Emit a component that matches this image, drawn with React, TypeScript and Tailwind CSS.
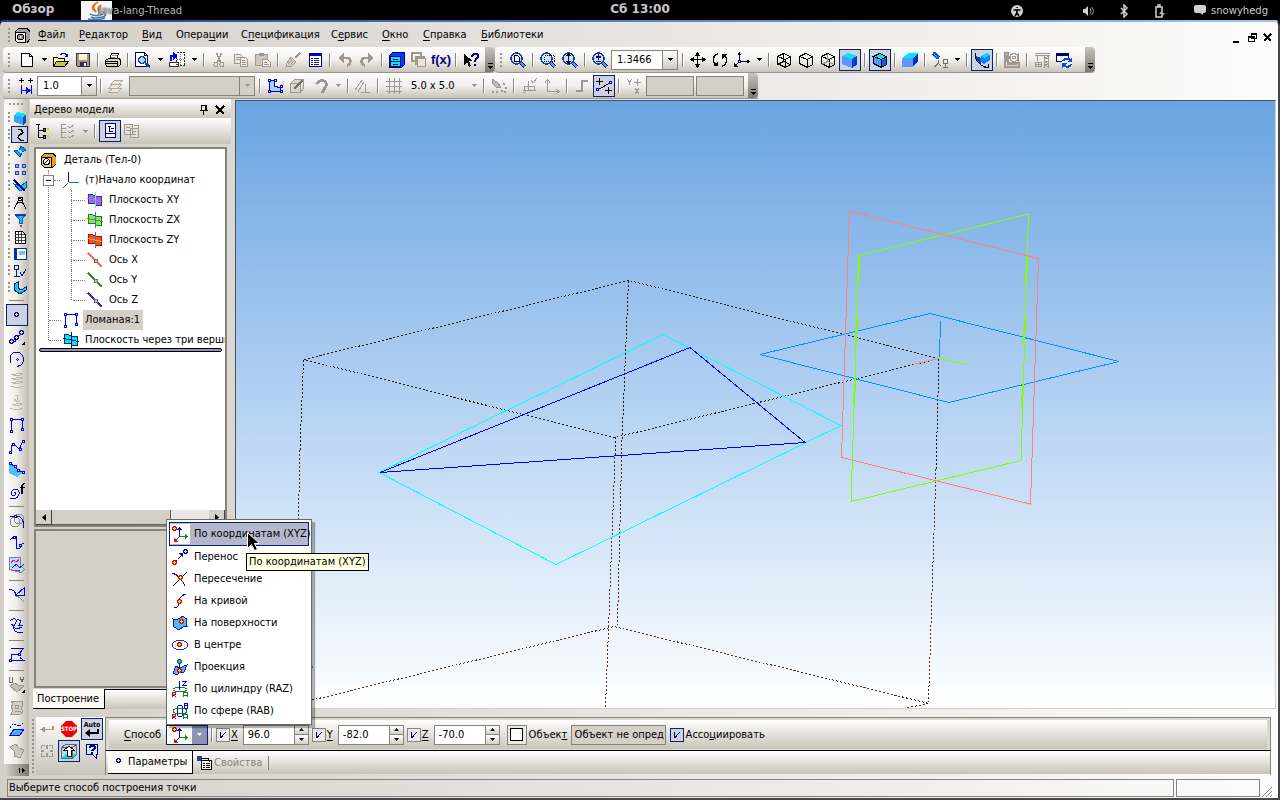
import { useState } from 'react';
import type { ReactNode } from 'react';

const GRAY = '#a0988e';
const BLUE = '#0000f0';
const NAVY = '#00007f';

function Icon({ children, size = 16 }: { children: ReactNode; size?: number }) {
  return (
    <svg
      width={size}
      height={size}
      viewBox={`0 0 ${size} ${size}`}
      fill="none"
      shapeRendering="crispEdges"
      aria-hidden="true"
      className="shrink-0"
    >
      {children}
    </svg>
  );
}

// Hot spot used by all the point icons
function Dot({ x, y, ring = '#f00000', core = '#ffff00' }: { x: number; y: number; ring?: string; core?: string }) {
  return (
    <g>
      <path d={`M${x + 1} ${y}h3v1h1v3h-1v1h-3v-1h-1v-3h1z`} fill={ring} />
      <path d={`M${x + 2} ${y + 1}h1v1h1v1h-1v1h-1v-1h-1v-1h1z`} fill={core} />
    </g>
  );
}

function Node({ x, y, c = BLUE }: { x: number; y: number; c?: string }) {
  return (
    <g>
      <path d={`M${x} ${y}h3v3h-3z`} fill={c} />
      <path d={`M${x + 1} ${y + 1}h1v1h-1z`} fill="#fff" />
    </g>
  );
}

function Lens({ children }: { children: ReactNode }) {
  return (
    <Icon>
      <path d="M11 11l4 4" stroke={NAVY} strokeWidth="4" />
      <path d="M11 11l4 4" stroke="#5a8fe0" strokeWidth="2" />
      <circle cx="6.5" cy="6.5" r="5.5" fill="#c9e4fb" stroke="#1c3aa0" strokeWidth="1.5" />
      {children}
    </Icon>
  );
}

function Cube({ hidden = '' }: { hidden?: string }) {
  return (
    <Icon>
      <path d="M1.5 4.5l6-3 7 3v8l-5 3-8-4zM1.5 4.5l8 3 5-3M9.5 7.5v8" stroke="#000" />
      {hidden && <path d="M7.5 1.5v8l7 3M7.5 9.5l-6 3" stroke={hidden} />}
    </Icon>
  );
}

const newDoc = (
  <Icon>
    <path d="M2.5 1.5h8l3 3v10h-11z" fill="#fff" stroke="#000" />
    <path d="M10.5 1.5v3h3" stroke="#000" />
  </Icon>
);
const openDoc = (
  <Icon>
    <path d="M.5 14.5v-9h4l1 1h6v3" fill="#ffffa0" stroke="#000" />
    <path d="M.5 14.5l3-5h12l-4 5z" fill="#c8c850" stroke="#000" />
    <path d="M8 3c1-2 4-2 5 0" stroke={BLUE} strokeWidth="1.5" />
    <path d="M15 1v4h-4z" fill={BLUE} />
  </Icon>
);
const saveDoc = (
  <Icon>
    <path d="M1.5 1.5h13v13h-12l-1-1z" fill="#a89878" stroke="#303048" />
    <path d="M4 2h8v6H4z" fill="#fdf6e4" />
    <path d="M5 10h7v4H5z" fill="#303048" />
    <path d="M9 11h2v3H9z" fill="#fff" />
  </Icon>
);
const printDoc = (
  <Icon>
    <path d="M4.5 7.5l2-6h7l-2 6z" fill="#fff" stroke="#000" />
    <path d="M7 3.5h5M6 5.5h5" stroke="#909090" />
    <path d="M.5 8.5l3-2h11l1 2v4l-2 2H2l-1.5-2z" fill="#d8d8b0" stroke="#000" />
    <path d="M1 9.5h11M1 11.5h11M12.5 9v5M3 14.5h9" stroke="#000" />
    <path d="M9 10h2v1H9z" fill="#f0e000" />
  </Icon>
);
const previewDoc = (
  <Icon>
    <path d="M.5.5h9l3 3v11H.5z" fill="#fff" stroke={NAVY} />
    <path d="M9.5.5v3h3" stroke={NAVY} />
    <path d="M10 11l5 4" stroke="#1c3aa0" strokeWidth="2.5" />
    <circle cx="7" cy="8" r="3.5" fill="#a8dcfb" stroke="#1c3aa0" strokeWidth="1.5" />
  </Icon>
);
const sheetDoc = (
  <Icon>
    <path d="M7.500 .5h8v13h-8z" stroke="#303030" strokeDasharray="2 1" fill="#fff" />
    <path d="M8 7.5h7M11.5 2v11" stroke="#707070" strokeDasharray="1 1" />
    <path d="M.5 10.5h9v4h-9z" fill="#fff" stroke="#303030" />
    <path d="M7 12h2v1H7z" fill="red" />
    <path d="M2 9V4h3" stroke={BLUE} strokeWidth="2" />
    <path d="M4 0l4 4-4 4z" fill={BLUE} />
  </Icon>
);
const cutIcon = (
  <Icon>
    <path d="M5.5 1l4 9M10.5 1l-4 9" stroke={GRAY} strokeWidth="1.5" />
    <circle cx="5" cy="12.5" r="2" stroke={GRAY} />
    <circle cx="11" cy="12.5" r="2" stroke={GRAY} />
  </Icon>
);
const copyIcon = (
  <Icon>
    <path d="M1.5 2.5h6l2 2v7h-8z" fill="#eee9e2" stroke={GRAY} />
    <path d="M3 5.5h4M3 7.5h4" stroke={GRAY} />
    <path d="M7.5 5.5h5l2 2v7h-7z" fill="#eee9e2" stroke={GRAY} />
    <path d="M9 8.5h3M9 10.5h4M9 12.5h4" stroke={GRAY} />
  </Icon>
);
const pasteIcon = (
  <Icon>
    <path d="M.5 2.5h12v11H.5z" fill="#cfc8be" stroke={GRAY} />
    <path d="M4 1h5v3H4z" fill={GRAY} />
    <path d="M7.5 7.5h5l3 3v4h-8z" fill="#f4f0ea" stroke={GRAY} />
    <path d="M9 10.5h3M9 12.5h5" stroke={GRAY} />
  </Icon>
);
const brushIcon = (
  <Icon>
    <path d="M15 1l-5 5" stroke={GRAY} strokeWidth="2.5" />
    <path d="M6 5l5 5-4 4-6 1 1-4z" fill="#d8cec4" stroke={GRAY} />
    <path d="M3 12l4-4M5 13l4-4" stroke={GRAY} />
  </Icon>
);
const specIcon = (
  <Icon>
    <path d="M2.5 1.5h12v13h-12z" fill="#fff" stroke={NAVY} />
    <path d="M3 2h11v2H3z" fill={BLUE} />
    <path d="M4 6.5h2M4 8.5h2M4 10.5h2M4 12.5h2M7 6.5h5M7 8.5h5M7 10.5h5M7 12.5h5" stroke="#202060" />
  </Icon>
);
const undoIcon = (
  <Icon>
    <path d="M5 6h5c4 0 5 5 0 8" stroke={GRAY} strokeWidth="2.5" />
    <path d="M1 6l6-5v10z" fill={GRAY} />
  </Icon>
);
const redoIcon = (
  <Icon>
    <path d="M11 6H6c-4 0-5 5 0 8" stroke={GRAY} strokeWidth="2.5" />
    <path d="M15 6L9 1v10z" fill={GRAY} />
  </Icon>
);
const libIcon = (
  <Icon>
    <path d="M.5 3.5l3-3h12v12l-3 3H.5z" fill="#0040ff" stroke={NAVY} />
    <path d="M1.5 4.5h10v10h-10z" fill="#00e8f0" stroke={NAVY} />
    <path d="M2 9.5h9M4 7.5h5M4 12.5h5" stroke={NAVY} />
  </Icon>
);
const varsIcon = (
  <Icon>
    <path d="M1 1h9v8H1zM5 5h8v7H5z" stroke={GRAY} strokeWidth="2" />
    <path d="M6.5 6.5h8v8h-8z" stroke={GRAY} fill="#e8e2da" />
  </Icon>
);
const helpIcon = (
  <Icon>
    <path d="M1 2v11l3-3 2 5 2-1-2-5h4z" fill="#000" />
    <path d="M9 5c0-4 6-4 6-1 0 3-3 2-3 6M12 12v2" stroke={NAVY} strokeWidth="2" />
  </Icon>
);

const zoomSheet = (
  <Lens>
    <path d="M4.5 3.5h3l2 2v4h-5z" stroke="#000" fill="#fff" />
  </Lens>
);
const zoomFrame = (
  <Lens>
    <path d="M4.5 3.5h10v6h-10z" stroke="#000" strokeDasharray="1 1" />
  </Lens>
);
const zoomFit = (
  <Lens>
    <path d="M6.5 3v7" stroke="#000" />
    <path d="M6.5 1l2.500 3h-5zM6.5 12l2.500-3h-5z" fill="#000" />
  </Lens>
);
const zoomPlus = (
  <Lens>
    <path d="M6.5 2v6M4 5h5M4 9.5h5" stroke={NAVY} strokeWidth="1.5" />
  </Lens>
);
const moveIcon = (
  <Icon>
    <path d="M7.5 2v12M2 7.5h12" stroke="#000" />
    <path d="M7.5 0l3 4h-6zM7.5 16l3-4h-6zM0 7.5l4-3v6zM16 7.5l-4-3v6z" fill="#000" />
  </Icon>
);
const rotateIcon = (
  <Icon>
    <path d="M6 2C1 3 0 10 4 13M10 14c5-1 6-8 2-11" stroke="#000" strokeWidth="1.5" />
    <path d="M1 14h5V9zM15 2h-5v5z" fill="#000" />
  </Icon>
);
const orientIcon = (
  <Icon>
    <path d="M5.5 9V2M6 9.5h8M5 10l-4 4" stroke="#000" />
    <path d="M5.5 0l2 3h-4zM16 9.5l-3 2v-4zM0 15v-4l4 4z" fill="#000" />
    <Node x={4} y={8} />
  </Icon>
);
const shaded = (
  <Icon>
    <path d="M0 4l6-3 9 3-5 3z" fill="#00e8ff" />
    <path d="M0 4l10 3v9l-10-4z" fill="#5898ff" />
    <path d="M10 7l5-3v9l-5 3z" fill="#0040d0" />
  </Icon>
);
const shadedEdges = (
  <Icon>
    <path d="M1.5 4.5l6-3 7 3-5 3z" fill="#00e8ff" stroke="#000" />
    <path d="M1.5 4.5l8 3v8l-8-4z" fill="#5898ff" stroke="#000" />
    <path d="M9.5 7.5l5-3v8l-5 3z" fill="#1060d8" stroke="#000" />
  </Icon>
);
const perspective = (
  <Icon>
    <path d="M0 6l7-5h9l-5 5z" fill="#00e8ff" />
    <path d="M0 6h11v9H0z" fill="#5898ff" />
    <path d="M11 6l5-5v8l-5 6z" fill="#0030c0" />
  </Icon>
);
const spotlight = (
  <Icon>
    <path d="M1 1l6 5" stroke="#1050e0" strokeWidth="4" />
    <path d="M2 2l4 4" stroke="#00c8f8" strokeWidth="1" />
    <path d="M6.5 8v3l-4 4M6.5 11l2 3M11.5 7.5h4v4h-4zM13.5 12v3M11 15.5h5" stroke="#707070" />
  </Icon>
);
const rebuild = (
  <Icon>
    <path d="M2 4l5 2v7l-5-4z" fill="#0040c0" />
    <path d="M7 4l6-3 3 2v5l-6 4-4-3z" fill="#1080ff" />
    <path d="M7 4l6-3 3 2-5 3z" fill="#00d8ff" />
    <path d="M2 1C-1 5 4 13 12 15M10 15h4v-3" stroke="#000" />
  </Icon>
);
const sectionGray = (
  <Icon>
    <path d="M1 1h3v10h11v4H1z" stroke={GRAY} strokeWidth="1.5" />
    <circle cx="10" cy="5.5" r="4" stroke={GRAY} strokeWidth="1.5" />
    <circle cx="10" cy="5.5" r="1.5" stroke={GRAY} />
    <path d="M3 12.5h10M2.5 3v7M14.5 1v10" stroke={GRAY} />
  </Icon>
);
const craneIcon = (
  <Icon>
    <path d="M.5 1.5h15M.5 3.5h15M10.5 4v12M14.5 4v12M3.5 4v5M1.5 10.5h6v4h-6zM1 12.5h6M4.5 10v4" stroke={GRAY} />
    <path d="M10 4l5 4-5 4 5 3M14 4l-4 4 4 4-4 3" stroke={GRAY} />
  </Icon>
);
const refreshWin = (
  <Icon>
    <path d="M.5 1.5h12v8h-12z" fill="#fff" stroke={NAVY} />
    <path d="M0 1h13v3H0z" fill={NAVY} />
    <path d="M6 6h10v10H6z" fill="#fff" />
    <path d="M7 9c2-3 5-3 7-1M15 12c-1 3-5 4-7 1" stroke="#0050e0" strokeWidth="2" />
    <path d="M16 5v5h-5zM6 16v-5h5z" fill="#0050e0" />
  </Icon>
);

const stepIcon = (
  <Icon>
    <path d="M3.5 0v5M1 2.500h5M12.500 0v5M10 2.500h5" stroke="#000" />
    <path d="M3.500 7v9M13.500 7v9M4 12.500h8" stroke={BLUE} />
    <path d="M8 9v7l5-3.500z" fill={BLUE} />
  </Icon>
);
const layersIcon = (
  <Icon>
    <path d="M1 14l4-4h9l-4 4zM1 10l4-4h9l-4 4zM3 6l4-4h8l-4 4z" fill="#f0e8e0" stroke="#b0a698" />
  </Icon>
);
const sketchIcon = (
  <Icon>
    <path d="M2.5 2.5h5v6l6 1v4h-11z" fill="#a8d4ec" stroke={BLUE} />
    <Node x={1} y={1} />
    <Node x={7} y={1} />
    <Node x={1} y={12} />
    <Node x={13} y={12} />
    <Node x={13} y={7} />
  </Icon>
);
const localBox = (
  <Icon>
    <path d="M1.5 5.5l4-4h9l-3 4zM1.5 5.5h10v9h-10zM11.5 14.5l3-4v-9" stroke={GRAY} fill="#ddd4ca" />
    <path d="M5 11l8-8" stroke="#706860" strokeWidth="2" />
  </Icon>
);
const magnetIcon = (
  <Icon>
    <path d="M3 7c4-7 12-5 10 1l-4 7" stroke={GRAY} strokeWidth="3" />
    <path d="M1 5l4 3" stroke="#e8e0d8" strokeWidth="2" />
  </Icon>
);
const perpIcon = (
  <Icon>
    <path d="M0 12L7 2M3 14l6-10M10.5 6v8M6 14.5h9" stroke={GRAY} />
  </Icon>
);
const gridIcon = (
  <Icon>
    <path d="M3.5 0v16M8.5 0v16M13.5 0v16M0 3.5h16M0 8.5h16M0 13.5h16" stroke={GRAY} />
  </Icon>
);
const snapIcon = (
  <Icon>
    <path d="M1 1l5 3 4 5-4 1-5-5z" fill="#c0b8ae" stroke={GRAY} />
    <path d="M12 5h2v2h-2zM14 9h2v2h-2zM10 12h2v2h-2zM5 13h2v2H5zM1 13h2v2H1zM13 13h2v2h-2z" fill={GRAY} />
  </Icon>
);
const localAxes = (
  <Icon>
    <path d="M6.5 3v9h7M6 12l-5 3M3 8.5h9v4H2zM9 2l2 3 4-5" stroke={GRAY} />
  </Icon>
);
const axesGray = (
  <Icon>
    <path d="M3.5 2v11h11M1 4.5l2.5-3L6 4.5M12 11l3 2.5-3 2.5" stroke={GRAY} />
  </Icon>
);
const orthoIcon = (
  <Icon>
    <path d="M2 13h6V3h6" stroke={GRAY} strokeWidth="1.5" />
  </Icon>
);
const snapPoints = (
  <Icon>
    <path d="M3.500 0v7M0 3.500h7M12.500 9v7M9 12.500h7" stroke="#000" />
    <path d="M3 11l11-6" stroke="#000" />
    <Node x={0} y={10} />
    <Node x={13} y={3} />
  </Icon>
);
const xyIcon = (
  <Icon>
    <path d="M1 1l2.5 3L6 1M3.5 4v3M11.5 1v7M8 4.5h7M9 10l4 6M13 10l-4 6" stroke={GRAY} />
  </Icon>
);

function Grip() {
  return (
    <svg width="4" height="18" className="mx-1 shrink-0" shapeRendering="crispEdges" aria-hidden="true">
      <path d="M2 2v14" stroke="#98948c" strokeWidth="2" strokeDasharray="2 2" />
    </svg>
  );
}

function Sep() {
  return <span className="mx-[3px] h-[14px] w-[2px] shrink-0 border-r border-white bg-[#8a867e]" />;
}

function Tool({ icon, label, active }: { icon: ReactNode; label: string; active?: boolean }) {
  return (
    <button
      type="button"
      aria-label={label}
      className={
        active
          ? 'flex h-[22px] w-[22px] shrink-0 items-center justify-center border border-[#0a246a] bg-[#ced2e0]'
          : 'flex h-[22px] w-[22px] shrink-0 items-center justify-center'
      }
    >
      {icon}
    </button>
  );
}

function Arrow({ gray }: { gray?: boolean }) {
  return (
    <span className="flex w-[12px] shrink-0 justify-center">
      <svg width="5" height="3" shapeRendering="crispEdges" aria-hidden="true">
        <path d="M0 0h5v1H0zM1 1h3v1H1zM2 2h1v1H2z" fill={gray ? GRAY : '#000'} />
      </svg>
    </span>
  );
}

function Cap() {
  return (
    <span className="flex w-[10px] shrink-0 items-end justify-center self-stretch rounded-r-sm bg-gradient-to-b from-[#c8c5bf] to-[#7c7870] pb-[3px]">
      <svg width="5" height="6" shapeRendering="crispEdges" aria-hidden="true">
        <path d="M0 0h5v1H0zM0 3h5v1H0zM1 4h3v1H1zM2 5h1v1H2z" fill="#000" />
      </svg>
    </span>
  );
}

function Combo({ label, value, className, disabled }: { label: string; value: string; className: string; disabled?: boolean }) {
  return (
    <span className={'relative flex h-5 shrink-0 border border-[#86837d] ' + className}>
      <select
        aria-label={label}
        disabled={disabled}
        className={
          disabled
            ? 'h-full w-full appearance-none bg-[#d4d0c8]'
            : 'h-full w-full appearance-none bg-white pl-[5px] text-black'
        }
      >
        <option>{value}</option>
      </select>
      <span
        className={
          disabled
            ? 'pointer-events-none absolute inset-y-0 right-0 flex w-[15px] items-center justify-center border-l border-[#86837d] bg-[#d4d0c8]'
            : 'pointer-events-none absolute inset-y-0 right-0 flex w-[15px] items-center justify-center border-l border-[#86837d] bg-gradient-to-b from-white to-[#cfcbc2]'
        }
      >
        <Arrow gray={disabled} />
      </span>
    </span>
  );
}

const bar = 'flex items-center bg-gradient-to-b from-white via-[#f1f0ed] to-[#c8c4b9] rounded-l border-b border-[#9a968e]';

function TopBar() {
  return (
    <header className="relative flex h-5 shrink-0 items-start bg-black font-['DejaVu_Sans',sans-serif] text-[#c8c8c8]">
      <span className="pl-3 text-[12px] leading-[19px] font-bold">Обзор</span>
      <span className="ml-[27px] flex items-center">
        <svg width="31" height="19" viewBox="0 0 31 19" aria-hidden="true">
          <path d="M0 0h31v19H0z" fill="#f4f5f7" />
          <path d="M17 1c-6 4-5 6-2 10-5-3-5-6 2-10zM20 4c-4 3-3 5-2 8 2-3-1-4 2-8z" stroke="#e76f1c" strokeWidth="1.5" fill="#e76f1c" />
          <path d="M9 13c4 2 9 2 13 0M10 16c4 2 8 1 11 0M22 12c4 0 3 4-1 4M7 18c6 1 12 1 17-1" stroke="#5382a1" strokeWidth="1.5" fill="none" />
        </svg>
        <span className="relative -ml-[14px] text-[10px] leading-[21px] text-[#b4b4b4] [text-shadow:0_0_2px_#000]">java-lang-Thread</span>
      </span>
      <span className="absolute inset-x-0 text-center text-[12px] leading-[19px] font-bold">Сб 13:00</span>
      <span className="ml-auto flex items-center pr-3 text-[10px] leading-[21px]">
        <svg width="200" height="14" viewBox="0 0 200 14" aria-hidden="true">
          <circle cx="10" cy="7" r="6" fill="#d0d0d0" />
          <path d="M10 3v1M6.500 6h7M10 6v3l-2 3M10 9l2 3" stroke="#000" strokeWidth="1.5" />
          <path d="M76 5h2l3-3v10l-3-3h-2z" fill="#d0d0d0" />
          <path d="M83 4q2 3 0 6M85 3q3 4 0 8" stroke="#909090" fill="none" />
          <path d="M114 4l6 6-3 3V1l3 3-6 6" stroke="#d0d0d0" fill="none" strokeWidth="1.5" />
          <path d="M149 3h6v10h-6zM151 1h2v2h-2z" stroke="#d0d0d0" fill="none" strokeWidth="1.5" />
          <path d="M155 6l-3 4h3v3l3-4h-3z" fill="#b0b0b0" />
          <path d="M189 1h8q2 0 2 2v4q0 2-2 2h-1v2l-3-2h-4q-2 0-2-2V3q0-2 2-2z" fill="#d0d0d0" />
        </svg>
        <span className="ml-1">snowyhedg</span>
      </span>
    </header>
  );
}

const menuItems = [
  ['', 'Ф', 'айл', 'w-[41px]'],
  ['', 'Р', 'едактор', 'w-[63px]'],
  ['', 'В', 'ид', 'w-[34px]'],
  ['Опера', 'ц', 'ии', 'w-[65px]'],
  ['С', 'п', 'ецификация', 'w-[90px]'],
  ['С', 'е', 'рвис', 'w-[51px]'],
  ['', 'О', 'кно', 'w-[41px]'],
  ['', 'С', 'правка', 'w-[58px]'],
  ['', 'Б', 'иблиотеки', 'w-[70px]'],
];

function MenuBar() {
  return (
    <nav className="flex h-[25px] shrink-0 items-center pt-px">
      <Grip />
      <span className="mr-2 -ml-px">
        <Icon>
          <path d="M1 5l4-4h8l3 4v7l-3 4H5l-4-3z" fill="#a0a0a0" stroke="#000" />
          <path d="M1 5h10v10H3l-2-2z" fill="#f0f0f0" stroke="#000" />
          <circle cx="6.5" cy="10" r="3" fill="#909090" stroke="#000" />
          <circle cx="6.5" cy="10" r="1" fill="#fff" />
        </Icon>
      </span>
      {menuItems.map(([before, key, after, width]) => (
        <button key={key + after} type="button" className={'shrink-0 text-left whitespace-nowrap ' + width}>
          {before}
          <u className="underline-offset-2">{key}</u>
          {after}
        </button>
      ))}
      <span className="mt-[6px] mr-[2px] ml-auto flex items-center gap-[3px]">
        <Icon size={12}><path d="M1 9h6v2H1z" fill="#000" /></Icon>
        <Icon size={12}><path d="M4.5 2.5h5v4h-5zM1.5 5.5h6v4h-6z" stroke="#000" fill="#fff" /><path d="M4 1h6v2H4zM1 4h7v2H1z" fill="#000" /></Icon>
        <Icon size={12}><path d="M2 2l7 7M9 2l-7 7" stroke="#000" strokeWidth="1.5" /></Icon>
      </span>
    </nav>
  );
}

function MainToolbar() {
  return (
    <div className="flex h-[26px] shrink-0 overflow-hidden">
      <div className={bar + ' rounded-r'}>
        <Grip />
        <span className="w-px shrink-0" />
        <Tool icon={newDoc} label="Создать" />
        <Arrow />
        <Tool icon={openDoc} label="Открыть" />
        <Tool icon={saveDoc} label="Сохранить" />
        <Sep />
        <Tool icon={printDoc} label="Печать" />
        <Sep />
        <Tool icon={previewDoc} label="Просмотр" />
        <Arrow />
        <Tool icon={sheetDoc} label="Лист" />
        <Arrow />
        <Sep />
        <Tool icon={cutIcon} label="Вырезать" />
        <Tool icon={copyIcon} label="Копировать" />
        <Tool icon={pasteIcon} label="Вставить" />
        <Sep />
        <Tool icon={brushIcon} label="Свойства" />
        <Tool icon={specIcon} label="Спецификация" />
        <Sep />
        <Tool icon={undoIcon} label="Отменить" />
        <Tool icon={redoIcon} label="Повторить" />
        <Sep />
        <Tool icon={libIcon} label="Библиотеки" />
        <Tool icon={varsIcon} label="Переменные" />
        <button type="button" className="w-[22px] shrink-0 font-['Liberation_Sans',sans-serif] text-[13px] font-bold text-[#00007f]">f(x)</button>
        <Sep />
        <Tool icon={helpIcon} label="Справка" />
        <span className="w-[3px] shrink-0" />
        <Cap />
      </div>
      <div className={bar + ' rounded-r'}>
        <Grip />
        <Tool icon={zoomSheet} label="Показать все" />
        <Sep />
        <Tool icon={zoomFrame} label="Рамка" />
        <Tool icon={zoomFit} label="Масштаб" />
        <Sep />
        <Tool icon={zoomPlus} label="Приблизить" />
        <Combo label="Текущий масштаб" value="1.3466" className="mr-px w-[67px]" />
        <Sep />
        <Tool icon={moveIcon} label="Сдвинуть" />
        <Tool icon={rotateIcon} label="Повернуть" />
        <Tool icon={orientIcon} label="Ориентация" />
        <Arrow />
        <Sep />
        <Tool icon={<Cube hidden="#000" />} label="Каркас" />
        <Tool icon={<Cube />} label="Без невидимых линий" />
        <Tool icon={<Cube hidden="#909090" />} label="Невидимые линии тонкие" />
        <Tool icon={shaded} label="Полутоновое" active />
        <Sep />
        <Tool icon={shadedEdges} label="Полутоновое с каркасом" active />
        <Sep />
        <Tool icon={perspective} label="Перспектива" />
        <Sep />
        <Tool icon={spotlight} label="Освещение" />
        <Arrow />
        <Sep />
        <Tool icon={rebuild} label="Перестроить" active />
        <Sep />
        <Tool icon={sectionGray} label="Сечение" />
        <Sep />
        <Tool icon={craneIcon} label="Сборка" />
        <Tool icon={refreshWin} label="Обновить" />
        <span className="w-[10px] shrink-0" />
        <Cap />
      </div>
    </div>
  );
}

function StateToolbar() {
  return (
    <div className="flex h-[26px] shrink-0 overflow-hidden">
      <div className={bar}>
        <Grip />
        <Tool icon={stepIcon} label="Шаг курсора" />
        <Combo label="Шаг" value="1.0" className="w-[60px]" />
        <Sep />
        <Tool icon={layersIcon} label="Слои" />
        <span className="w-[2px] shrink-0" />
        <Combo label="Слой" value="" className="mr-px w-[126px]" disabled />
        <Sep />
        <Tool icon={sketchIcon} label="Эскиз" />
        <Tool icon={localBox} label="Контекст" />
        <span className="w-[2px] shrink-0" />
        <Tool icon={magnetIcon} label="Привязки" />
        <Arrow gray />
        <Sep />
        <Tool icon={perpIcon} label="Параметрический режим" />
        <Sep />
        <span className="w-px shrink-0" />
        <Tool icon={gridIcon} label="Сетка" />
        <button type="button" className="ml-[6px] w-[57px] shrink-0 text-left">5.0 x 5.0</button>
        <Arrow gray />
        <Sep />
        <Tool icon={snapIcon} label="Дискретность" />
        <Sep />
        <span className="w-px shrink-0" />
        <Tool icon={localAxes} label="ЛСК" />
        <Tool icon={axesGray} label="Оси" />
        <Sep />
        <Tool icon={orthoIcon} label="Ортогональное черчение" />
        <Tool icon={snapPoints} label="Привязка" active />
        <Sep />
        <Tool icon={xyIcon} label="Координаты" />
        <input aria-label="X" disabled className="ml-px h-5 w-12 shrink-0 border border-[#86837d] bg-[#d4d0c8]" />
        <input aria-label="Y" disabled className="mr-1 ml-[2px] h-5 w-12 shrink-0 border border-[#86837d] bg-[#d4d0c8]" />
        <Cap />
      </div>
    </div>
  );
}

const compact: { label: string; icon: ReactNode; active?: boolean }[] = [
  { label: 'Деталь', icon: <Icon><path d="M2 5l4-3 8 2-3 3z" fill="#00e8ff" /><path d="M2 5l9 2v8l-9-3z" fill="#40a0ff" /><path d="M11 7l3-3v8l-3 3z" fill="#0050c8" /></Icon> },
  { label: 'Кривые', active: true, icon: <Icon><path d="M6 2.500h3l2 3-4 3-1 2 3 3h3" stroke="#000" strokeWidth="1.500" /></Icon> },
  { label: 'Поверхности', icon: <Icon><path d="M2 7l5-1 2-4 5 4-4 2-2 5z" fill="#2090e8" stroke="#0050b0" /><path d="M6 6l5 3" stroke="#a0e0ff" strokeWidth="2" /></Icon> },
  { label: 'Массивы', icon: <Icon><path d="M3 3h3v3H3zM10 3h3v3h-3zM3 10h3v3H3zM10 10h3v3h-3z" fill="#a0b8ff" stroke="#2040c0" /></Icon> },
  { label: 'Вспомогательная геометрия', icon: <Icon><path d="M2 6l7 2 5-4v6l-6 3z" fill="#20c8f8" stroke="#0050b0" /><path d="M2 2l11 11" stroke={NAVY} strokeWidth="1.5" /></Icon> },
  { label: 'Измерения', icon: <Icon><path d="M8 2L2 14M8 2l6 12M4 10q4-5 8 0M6 2h4v3H6z" stroke="#000" /></Icon> },
  { label: 'Фильтры', icon: <Icon><path d="M3 2h11l-4 5v4H7V7z" fill="#30b0f8" stroke="#1060c0" /><path d="M3 2h11v2H3z" fill="#1040a0" /><path d="M8 13h2v2H8z" fill="#d04000" /></Icon> },
  { label: 'Таблицы', icon: <Icon><path d="M3.5 2.5h7l3 3v9h-10z" fill="#fff" stroke="#000" /><path d="M3 5.500h10M3 8.500h10M3 11.500h10M6.500 3v12M9.500 3v12" stroke="#404040" /></Icon> },
  { label: 'Отчеты', icon: <Icon><path d="M3.500 2.500h11v11h-11z" fill="#fff" stroke="#0030a0" strokeWidth="1.500" /><path d="M2 2h3v12H2z" fill="#0030a0" /><path d="M7 5h6v4H7z" fill="#80c0f8" /></Icon> },
  { label: 'Оформление', icon: <Icon><path d="M2.500 2.500h4v4h-4zM4.500 7v6M2 13.500h6M8 9l2 4 4-7" stroke="#001880" /></Icon> },
  { label: 'Листовое тело', icon: <Icon><path d="M2 4l4-2v6l3 2 5-3v3l-6 4-6-4z" fill="#20c8e8" stroke="#002080" /></Icon> },
];

const curveTools: { label: string; icon: ReactNode }[] = [
  { label: 'Группа точек', icon: <Icon><path d="M3 13c8 1-2-6 4-6s5-2 6-4" stroke={BLUE} /><Dot x={0} y={10} ring={BLUE} /><Dot x={5} y={6} ring={BLUE} /><Dot x={10} y={1} ring={BLUE} /><path d="M16 12v4h-4z" fill="#000" /></Icon> },
  { label: 'Дуга', icon: <Icon><path d="M1 8C1 1 9-1 13 4s0 12-5 11M1 8l1 4" stroke={BLUE} /><path d="M7 8h1v1H7zM8 7h1v1H8zM9 8h1v1H9zM8 9h1v1H8z" fill={BLUE} /></Icon> },
  { label: 'Спираль цилиндрическая', icon: <Icon><path d="M2 1q6 3 12 0q-6-2-10 2M2 5q6 3 12 0q-6-2-10 2M2 9q6 3 12 0q-6-2-10 2M2 13q6 3 12 0" stroke="#c0b4a8" /></Icon> },
  { label: 'Спираль коническая', icon: <Icon><path d="M6 1q3-2 3 2t-4 1M5 5q4 3 6 0M3 9q6 3 10 0q-6-2-8 2M1 13q7 3 13 0" stroke="#c0b4a8" /></Icon> },
  { label: 'Ломаная', icon: <Icon><path d="M2.500 14V2.500h11V12" stroke={BLUE} /><Node x={1} y={1} /><Node x={12} y={1} /><Node x={1} y={13} /><Node x={12} y={11} /></Icon> },
  { label: 'Сплайн', icon: <Icon><path d="M2 13C2 4 5 4 7 7s4 4 5-1l2-4" stroke={BLUE} /><Node x={0} y={12} /><Node x={3} y={4} /><Node x={10} y={9} /><Node x={13} y={1} /></Icon> },
  { label: 'Сплайн на поверхности', icon: <Icon><path d="M0 3l6 3 9 5-7 5-8-4z" fill="#50c0f8" /><path d="M1 3l5 2 3 4 6 3" stroke={BLUE} /><Node x={0} y={1} /><Node x={5} y={4} /><Node x={8} y={8} /><Node x={13} y={10} /></Icon> },
  { label: 'Кривая по закону', icon: <Icon><path d="M5 10c1-2 3 0 1 2s-5-1-3-4 8-2 7 3-6 5-9 4" stroke={BLUE} /><path d="M16 .5q-3 0-3 3V11M11 4.500h5" stroke="#000" strokeWidth="1.500" /></Icon> },
  { label: 'sep', icon: null },
  { label: 'Скругление', icon: <Icon><circle cx="6" cy="9" r="5" stroke="#909090" /><circle cx="10" cy="6" r="5" stroke="#909090" /><path d="M1 3h6c5 0 8 4 8 12" stroke={BLUE} /><Node x={5} y={2} /></Icon> },
  { label: 'Соединение', icon: <Icon><path d="M1 5l5-4c5 0-2 12 3 13 4 0 1-5 6-6" stroke={BLUE} /><Node x={4} y={1} /><Node x={10} y={9} /></Icon> },
  { label: 'Кривая пересечения', icon: <Icon><path d="M.5.5h11v8l4 4-3 3-12-3z" fill="#b8e0f4" stroke="#808080" /><path d="M2 6q2-4 4-2t4-2M5 13l6 1" stroke="#f000f0" /><path d="M3 11q4-5 6-2t6-2" stroke={BLUE} /></Icon> },
  { label: 'sep', icon: null },
  { label: 'Проекционная кривая', icon: <Icon><path d="M0 2q6 1 7 6M15 1L7 8h8z" stroke={BLUE} /><path d="M7 9q4 1 8 6" stroke="#808080" /></Icon> },
  { label: 'sep', icon: null },
  { label: 'Эквидистанта', icon: <Icon><path d="M1 4c5-5 8-1 5 3s1 6 7 3M2 8c4-2 1 7 6 7h6M8 2l4 2-2 4 4 0" stroke={BLUE} /></Icon> },
  { label: 'sep', icon: null },
  { label: 'Контур', icon: <Icon><path d="M2 1.500h12l-4 6H2v6h13l-4-3" stroke={BLUE} /><Node x={0} y={12} /><Node x={9} y={6} /></Icon> },
  { label: 'sep', icon: null },
  { label: 'UV', icon: <Icon><path d="M.5 0v5h3V0M11 0l2 5 2-5" stroke="#706860" /><path d="M1 9l5-3 3 2 6 1-7 6z" fill="#c8beb2" stroke={GRAY} /><path d="M16 12v4h-4z" fill="#000" /></Icon> },
  { label: 'Заплатка', icon: <Icon><path d="M2 2h11l1 4-2 3 2 4-3 2H2l2-4-2-3 2-3z" fill="#d8cec4" stroke={GRAY} /><path d="M6 6h3v3H6zM6 12h6" stroke={GRAY} /></Icon> },
  { label: 'Поверхность', icon: <Icon><path d="M1 14l4-6h10l-4 6z" fill="#40b0f8" stroke={BLUE} /><path d="M1 7q3-6 6-3t8-3" stroke={BLUE} strokeDasharray="2 1" /></Icon> },
  { label: 'Сшивка', icon: <Icon><path d="M1 4l6-3 3 4 5 2-4 8-6-2 1-4z" fill="#d0c6bc" stroke={GRAY} /></Icon> },
];

function CompactPanel() {
  return (
    <aside className="flex w-[25px] shrink-0 flex-col overflow-hidden rounded-t bg-gradient-to-r from-[#fdfdfc] via-[#efede9] to-[#bfbbb0]">
      <svg width="16" height="10" className="ml-1 shrink-0" shapeRendering="crispEdges" aria-hidden="true">
        <path d="M1 5h16" stroke="#98948c" strokeWidth="2" strokeDasharray="2 2" />
      </svg>
      {compact.map(({ label, icon, active }) => (
        <div key={label} className="flex h-[17px] shrink-0 items-center pl-[3px]">
          <svg width="4" height="12" className="shrink-0" shapeRendering="crispEdges" aria-hidden="true">
            <path d="M2 0v12" stroke="#98948c" strokeWidth="2" strokeDasharray="2 2" />
          </svg>
          <button
            type="button"
            aria-label={label}
            className={
              active
                ? 'flex h-[17px] w-[17px] items-center justify-center overflow-hidden border border-[#0a246a] bg-[#ced2e0]'
                : 'flex h-[17px] w-[17px] items-center justify-center overflow-hidden'
            }
          >
            {icon}
          </button>
        </div>
      ))}
      <span className="mx-[5px] mt-1 mb-[3px] h-px shrink-0 bg-[#8a867e]" />
      <span className="ml-[2px] flex shrink-0">
        <Tool active label="Точка" icon={<Icon><Dot x={5} y={5} ring={BLUE} /></Icon>} />
      </span>
      {curveTools.map(({ label, icon }, i) =>
        icon ? (
          <button key={i} type="button" aria-label={label} className="flex h-[22px] shrink-0 items-center justify-center">
            {icon}
          </button>
        ) : (
          <span key={i} className="mx-[5px] mt-1 mb-[3px] h-px shrink-0 bg-[#8a867e]" />
        ),
      )}
      <span className="mt-auto flex h-[12px] shrink-0 items-center justify-end bg-gradient-to-r from-[#d8d5ce] to-[#7c7870] pr-1">
        <svg width="6" height="5" shapeRendering="crispEdges" aria-hidden="true"><path d="M0 0h1v5H0zM3 0v5l3-2.500z" fill="#000" /></svg>
      </span>
    </aside>
  );
}

function PlaneIcon({ fill, edge, v, h }: { fill: string; edge: string; v: string; h: string }) {
  return (
    <Icon>
      <path d="M1.5 2.5h4l3 2h6v9h-5l-2-2h-6z" fill={fill} stroke={edge} />
      <path d="M8.5 0v16" stroke={v} />
      <path d="M0 6.5l16 3" stroke={h} />
    </Icon>
  );
}

function AxisIcon({ color }: { color: string }) {
  return (
    <Icon>
      <path d="M1 1l14 14" stroke={color} strokeWidth="2" />
      <path d="M7 7h3v3H7z" fill="#c8b8c8" stroke="#707070" />
    </Icon>
  );
}

const tree: { text: string; depth: number; icon: ReactNode; selected?: boolean }[] = [
  { text: '(т)Начало координат', depth: 1, icon: <Icon><path d="M5.500 0v10" stroke={BLUE} /><path d="M6 10.500h10" stroke="#109050" /><path d="M5 11l-5 5" stroke="#e02020" /></Icon> },
  { text: 'Плоскость XY', depth: 2, icon: <PlaneIcon fill="#7f70f8" edge="#4020c0" v="#70f080" h="#ff6060" /> },
  { text: 'Плоскость ZX', depth: 2, icon: <PlaneIcon fill="#70f070" edge="#208010" v="#5060e0" h="#e05020" /> },
  { text: 'Плоскость ZY', depth: 2, icon: <PlaneIcon fill="#ff5010" edge="#c00000" v="#6060e0" h="#70e050" /> },
  { text: 'Ось X', depth: 2, icon: <AxisIcon color="#ff6a4a" /> },
  { text: 'Ось Y', depth: 2, icon: <AxisIcon color="#309020" /> },
  { text: 'Ось Z', depth: 2, icon: <AxisIcon color="#5020b0" /> },
  { text: 'Ломаная:1', depth: 1, selected: true, icon: <Icon><path d="M2.500 14V2.500h11V12" stroke={BLUE} /><Node x={1} y={1} /><Node x={12} y={1} /><Node x={1} y={13} /><Node x={12} y={11} /></Icon> },
  { text: 'Плоскость через три вершины', depth: 1, icon: <PlaneIcon fill="#00e8f0" edge="#003060" v={NAVY} h={NAVY} /> },
];

function TreePanel() {
  const [open, setOpen] = useState(true);
  const rows = open ? tree : tree.filter((row) => row.depth === 1);
  return (
    <section className="flex w-[201px] shrink-0 flex-col overflow-hidden">
      <div className="flex h-[19px] shrink-0 items-center bg-gradient-to-b from-white to-[#cbc7bd] pt-[2px] pr-[5px] pl-1">
        <h2>Дерево модели</h2>
        <button type="button" aria-label="Закрепить" className="ml-auto"><Icon size={12}><path d="M3.500 1v5M3 1.500h5M7 1v5M8 1v5M2 6.500h8M5.500 7v4" stroke="#000" /></Icon></button>
        <button type="button" aria-label="Закрыть" className="ml-1"><Icon size={12}><path d="M2 2l8 8M10 2l-8 8" stroke="#000" strokeWidth="1.500" /></Icon></button>
      </div>
      <div className="flex h-[26px] shrink-0 items-center bg-gradient-to-b from-white to-[#c8c4b9] pl-[2px]">
        <Tool label="Структура модели" icon={<Icon><path d="M1 1.500h4M3.500 2v13M3 14.500h5M3 7.500h5" stroke="#000" strokeWidth="1.500" /><path d="M8.500 5.500h2v3h-2zM8.500 12.500h2v3h-2z" fill="#20a0a0" stroke="#000" /><path d="M12 5h2v2h-2zM12 12h2v2h-2z" fill="#f0c000" /></Icon>} />
        <span className="ml-[3px] flex">
          <Tool label="Отображение" icon={<Icon><path d="M1.500 1v14M1 1.500h5M1 5.500h5M1 9.500h5M1 14.500h5M8 3l2 2 4-3M8 8l2 2 4-3M8 13l2 2 4-3" stroke={GRAY} /></Icon>} />
        </span>
        <Arrow gray />
        <Sep />
        <Tool active label="Дерево" icon={<Icon><path d="M3.500 .5h10v14h-10z" fill="#fff" stroke={NAVY} strokeWidth="1.500" /><path d="M6 3.500h3M7.500 4v4h3M9 5.500h3M3 10.500h10" stroke={NAVY} /></Icon>} />
        <Tool label="Связи" icon={<Icon><path d="M.5 1.500h8v10h-8zM6.500 5.500h8v9h-8z" fill="#e8e0d8" stroke={GRAY} /><path d="M2 4.500h4M2 7.500h4M8 8.500h4M8 11.500h4M10 2h4v3" stroke={GRAY} /></Icon>} />
      </div>
      <div className="mx-[4px] mt-[3px] flex min-h-0 flex-1 flex-col border-2 border-[#86837d] bg-white text-black">
        <div className="flex h-[21px] shrink-0 items-center pl-1">
          <Icon>
            <path d="M1 5l4-4h8l3 4v7l-3 3H5l-4-3z" fill="#f0a020" stroke="#000" />
            <path d="M1 5h10v10H4l-3-3z" fill="#ffd060" stroke="#000" />
            <circle cx="6.5" cy="9.5" r="3" fill="#fff" stroke="#000" />
            <path d="M5 11l3-3" stroke="#000" />
          </Icon>
          <span className="ml-2">Деталь (Тел-0)</span>
        </div>
        <ul className="relative">
          <li aria-hidden="true" className="absolute top-0 left-[12px] h-[170px] border-l border-dotted border-[#808080]" />
          {rows.map(({ text, depth, icon, selected }, i) => (
            <li key={text} className="relative flex h-5 items-center whitespace-nowrap">
              {depth === 2 && <span className="absolute top-0 left-[35px] h-1/2 border-l border-dotted border-[#808080]" />}
              {depth === 2 && text !== 'Ось Z' && <span className="absolute bottom-0 left-[35px] h-1/2 border-l border-dotted border-[#808080]" />}
              {i === 0 ? (
                <button
                  type="button"
                  aria-label="Свернуть"
                  onClick={() => setOpen(!open)}
                  className="relative ml-[7px] flex h-[11px] w-[11px] items-center justify-center border border-[#808080] bg-white"
                >
                  <span className="h-px w-[5px] bg-black" />
                </button>
              ) : (
                <span className={depth === 2 ? 'w-[37px] shrink-0' : 'w-[13px] shrink-0'} />
              )}
              <span
                className={
                  i === 0
                    ? 'mr-[3px] w-[6px] shrink-0 border-t border-dotted border-[#808080]'
                    : 'mr-[2px] w-[12px] shrink-0 border-t border-dotted border-[#808080]'
                }
              />
              {icon}
              <span className={selected ? 'ml-[4px] bg-[#d4d0c8] py-[3px] pr-[3px] pl-[2px]' : 'ml-[6px] overflow-hidden'}>{text}</span>
            </li>
          ))}
        </ul>
        <div className="mx-[3px] -mt-[2px] h-[4px] shrink-0 rounded border border-black bg-[#9090b0]" />
        <div className="mt-auto flex h-[15px] shrink-0 bg-[#eae8e4]">
          <button type="button" aria-label="Влево" className="flex w-[16px] items-center justify-center border-r border-b border-[#404040] bg-[#d4d0c8]">
            <svg width="4" height="7" aria-hidden="true"><path d="M4 0v7L0 3.500z" fill="#000" /></svg>
          </button>
          <span className="w-[119px] border-r border-b border-[#606060] bg-[#d4d0c8]" />
          <button type="button" aria-label="Вправо" className="ml-auto flex w-[16px] items-center justify-center border-r border-b border-[#404040] bg-[#d4d0c8]">
            <svg width="4" height="7" aria-hidden="true"><path d="M0 0v7l4-3.500z" fill="#000" /></svg>
          </button>
        </div>
      </div>
      <div className="mx-[4px] mt-[2px] mb-px h-[159px] shrink-0 border-2 border-[#86837d] bg-[#d4d0c8]" />
      <div className="flex h-5 shrink-0 bg-[#d4d0c8]">
        <button type="button" className="ml-[3px] w-[72px] border-r border-b border-black bg-[#fbfaf5] pl-[4px] text-left">Построение</button>
        <span className="flex-1 border-t border-black bg-gradient-to-b from-white to-[#c8c4b9]" />
      </div>
    </section>
  );
}

function Viewport() {
  return (
    <main className="mt-px ml-[4px] min-w-0 flex-1 border border-[#45525f] border-r-[#d4d0c8] border-b-[#d4d0c8] bg-gradient-to-b from-[#69a4e2] to-white">
      <svg
        className="block h-full w-full"
        viewBox="236 101 1039 607"
        preserveAspectRatio="xMinYMin slice"
        fill="none"
        shapeRendering="crispEdges"
        role="img"
        aria-label="Модель"
      >
        <g strokeDasharray="2 2" stroke="#201810">
          <path d="M304 359.500L629 280.500L939 358.500L615 437.500z" />
          <path d="M303.500 360L300 450M628.500 281L622 440M615.500 437v20M939 359l-3 110" />
        </g>
        <g strokeDasharray="2 2" stroke="#5a2c14">
          <path d="M300 450L294 708M622 440L617.500 625M615 457L605.500 708M936 469L928.500 702" />
          <path d="M300 703L614 626.500L929 703.500L905 708" />
        </g>
        <path d="M379 472.500L663 334.500L841 425.500L556 564.500z" stroke="#00ffff" />
        <path d="M380 472.500L690 347.500L805 442.500z" stroke="#0000f0" />
        <path d="M760 354.500L930 313.500L1119 361.500L949 402.500zM940.500 321L939.500 357" stroke="#0090ff" />
        <path d="M859 255.500L1028.500 214L1021 460.500L851 501.500zM939 358.500l29 6" stroke="#80ff00" />
        <path d="M859 256l-1 30M857 316l-1 30M855 378l-1 28M1027 255l-1 31M1025 318l-1 27M1023 384l-1 24" stroke="#80ff00" strokeWidth="2" />
        <path d="M849.500 211L1038.500 258.500L1030.500 504L841.500 457.500zM913 364.500l26-6" stroke="#ff8080" />
        <path d="M312 666h1v2h-1z" fill="#20c020" />
      </svg>
    </main>
  );
}

const coordIcon = (
  <Icon>
    <Dot x={0} y={0} />
    <path d="M7.500 4v7" stroke={BLUE} />
    <path d="M7.500 1l2.500 3H5z" fill={BLUE} />
    <path d="M8 10.500h6" stroke="#109010" />
    <path d="M16 10.500l-3 2.500V8z" fill="#109010" />
    <path d="M7 11l-3 3" stroke="#d01010" />
    <path d="M2 16v-4l4 4z" fill="#d01010" />
  </Icon>
);

const methods: { text: string; icon: ReactNode }[] = [
  { text: 'По координатам (XYZ)', icon: coordIcon },
  { text: 'Перенос', icon: <Icon><path d="M4 12l7-7" stroke="#000080" strokeDasharray="2 1" /><path d="M11 4v5L6 4z" fill="#001080" /><Dot x={0} y={11} /><Dot x={11} y={0} ring={BLUE} /></Icon> },
  { text: 'Пересечение', icon: <Icon><path d="M1 15L15 1" stroke="#000" /><path d="M0 2q8 2 13 13" stroke={BLUE} /><Dot x={6} y={4} /></Icon> },
  { text: 'На кривой', icon: <Icon><path d="M2 15q5 0 5-6t7-8" stroke={BLUE} /><Dot x={5} y={6} /></Icon> },
  { text: 'На поверхности', icon: <Icon><path d="M1 4q7 1 9-3l5 3q-1 5 0 7-4 0-8 4l-5-3z" fill="#50b8f8" stroke="#0020c0" /><Dot x={7} y={4} /></Icon> },
  { text: 'В центре', icon: <Icon><ellipse cx="8" cy="8" rx="7.500" ry="5" stroke="#2030d0" /><Dot x={5} y={5} /></Icon> },
  { text: 'Проекция', icon: <Icon><path d="M1 14l3-7 3 2 8-3-3 7q-5 0-7 3z" fill="#50b8f8" stroke="#0020c0" /><path d="M7.500 4v6" stroke={BLUE} /><Dot x={5} y={0} ring="#0060c0" core="#50e050" /><Dot x={5} y={9} /></Icon> },
  { text: 'По цилиндру (RAZ)', icon: <Icon><path d="M1 8q7-4 14 0M1 9q7 4 14 0" stroke="#108020" /><path d="M7.500 0v9M10 .5h4l-3 4h4" stroke={BLUE} /><path d="M.5 16v-5h3v2.500H1l3 2.500" stroke="#c01010" /><path d="M11.500 16v-4l2-1 2 1v4M12 14h3" stroke="#108020" /></Icon> },
  { text: 'По сфере (RAB)', icon: <Icon><ellipse cx="8" cy="8" rx="3" ry="6" stroke={BLUE} /><ellipse cx="8" cy="8" rx="7" ry="2.500" stroke="#108020" /><path d="M12.500 5V.5h3v2h-3M15.500 3v2h-3" stroke={BLUE} /><path d="M.5 16v-5h3v2.500H1l3 2.500" stroke="#c01010" /><path d="M11.500 16v-4l2-1 2 1v4M12 14h3" stroke="#108020" /></Icon> },
];

function MethodMenu() {
  return (
    <div role="menu" className="absolute bottom-full left-0 z-10 w-[146px] border border-[#6c6a66] bg-white p-[2px] text-black shadow-[3px_3px_1px_rgba(0,0,0,0.3)]">
      {methods.map(({ text, icon }, i) => (
        <button
          key={text}
          type="button"
          role="menuitem"
          className={
            i === 0
              ? 'flex h-[24px] w-full items-center border border-[#0a246a] bg-[#b4b8ce] whitespace-nowrap'
              : 'flex h-[22px] w-full items-center pl-px whitespace-nowrap'
          }
        >
          <span className="flex h-[20px] w-[20px] shrink-0 items-center justify-center bg-white">{icon}</span>
          <span className="pl-[4px]">{text}</span>
        </button>
      ))}
      <div role="tooltip" className="absolute top-[33px] left-[79px] h-[18px] border border-black bg-[#ffffe1] px-[2px] leading-4 whitespace-nowrap">
        По координатам (XYZ)
      </div>
      <svg width="12" height="20" viewBox="0 0 12 20" className="absolute top-[12px] left-[80px]" aria-hidden="true">
        <path d="M.5.5v16l4-4 3 6 3-1-3-6h5z" fill="#000" stroke="#fff" />
      </svg>
    </div>
  );
}

function Check({ label, hot }: { label: string; hot?: boolean }) {
  return (
    <label className="flex shrink-0 items-center">
      <span className="relative flex h-[14px] w-[14px]">
        <input
          type="checkbox"
          defaultChecked
          className={
            hot
              ? 'h-[14px] w-[14px] appearance-none border border-[#0a246a] bg-[#ced2e0]'
              : 'h-[14px] w-[14px] appearance-none border border-[#86837d] bg-[#ece9e4]'
          }
        />
        <svg width="14" height="14" className="pointer-events-none absolute" shapeRendering="crispEdges" aria-hidden="true">
          <path d="M4.500 4v6M5 9.500L10 4" stroke={NAVY} />
        </svg>
      </span>
      <span className={hot ? 'ml-[2px]' : 'ml-px'}>{hot ? <>Ассо<u>ц</u>иировать</> : <u className="underline-offset-2">{label}</u>}</span>
    </label>
  );
}

function Coord({ label, value }: { label: string; value: string }) {
  return (
    <span className="mr-[3px] flex shrink-0 items-center">
      <Check label={label} />
      <span className="ml-[5px] flex h-5 w-[66px] border border-[#86837d] bg-white">
        <input aria-label={label} defaultValue={value} className="w-[50px] bg-white pl-1 text-black outline-none" />
        <span className="flex flex-1 flex-col border-l border-[#86837d]">
          <button type="button" aria-label="Больше" className="flex flex-1 items-center justify-center border-b border-[#86837d] bg-gradient-to-b from-white to-[#d4d0c8]">
            <svg width="5" height="3" aria-hidden="true"><path d="M0 3h5L2.500 0z" fill="#000" /></svg>
          </button>
          <button type="button" aria-label="Меньше" className="flex flex-1 items-center justify-center bg-gradient-to-b from-white to-[#d4d0c8]">
            <svg width="5" height="3" aria-hidden="true"><path d="M0 0h5L2.500 3z" fill="#000" /></svg>
          </button>
        </span>
      </span>
    </span>
  );
}

function PropertyPanel() {
  return (
    <section className="mt-[8px] mr-[5px] mb-px flex h-[58px] shrink-0">
      <svg width="6" height="58" className="shrink-0" shapeRendering="crispEdges" aria-hidden="true">
        <path d="M3 2v54" stroke="#98948c" strokeWidth="2" strokeDasharray="2 2" />
      </svg>
      <div className="grid w-[69px] shrink-0 grid-cols-3 content-start justify-items-center bg-gradient-to-b from-white to-[#c8c4b9] pt-px pr-[2px]">
        <Tool label="Ввод" icon={<Icon><path d="M3 8.500h11v-4" stroke={GRAY} strokeWidth="1.500" /><path d="M1 8.500l5-3v6z" fill={GRAY} /></Icon>} />
        <Tool
          label="Стоп"
          icon={
            <svg width="16" height="16" viewBox="0 0 16 16" aria-hidden="true">
              <path d="M5 0h6l5 5v6l-5 5H5l-5-5V5z" fill="#f00000" />
              <text x="8" y="10" textAnchor="middle" fontSize="6" fontWeight="bold" fill="#fff">STOP</text>
            </svg>
          }
        />
        <Tool
          active
          label="Auto"
          icon={
            <svg width="18" height="18" viewBox="0 0 18 18" aria-hidden="true">
              <text x="9" y="7" textAnchor="middle" fontSize="7" fontWeight="bold" fill="#000">Auto</text>
              <path d="M4 13h11V9" stroke="#000" strokeWidth="2" fill="none" />
              <path d="M2 13l5-4v8z" fill="#000" />
            </svg>
          }
        />
        <Tool label="Запомнить" icon={<Icon><path d="M2.500 6V2.500H6M10 2.500h3.500V6M13.500 10v3.500H10M6 13.500H2.500V10M8 2v4M8 10v4M2 8h3M11 8h3" stroke={GRAY} strokeWidth="1.500" /></Icon>} />
        <Tool active label="Проекция" icon={<Icon><path d="M0 15l4-4h12l-4 4z" fill="#00e8f0" /><path d="M.5 4.500l4-3h11v10l-4 4H.5zM.5 4.500h11v10M11.500 4.500l4-3" stroke="#606880" /><path d="M8 3l5 4h-3v6H6V7H3z" fill="#fff" stroke="#000" /></Icon>} />
        <Tool label="Помощь" icon={<Icon><path d="M2.500 1.500h11v10h-1v4l-4-4h-6z" fill="#c8f0ff" stroke={NAVY} /><path d="M6 5c0-3 5-3 5 0 0 2-3 1-3 3M8 9v2" stroke={NAVY} strokeWidth="2" /></Icon>} />
      </div>
      <div className="min-w-0 flex-1 border-t border-r border-l border-[#86837d]">
        <div className="bg-[#dcd9d2] px-[3px] pt-[2px] pb-px">
          <div className="flex h-[29px] items-center bg-gradient-to-b from-white to-[#c8c4b9] pl-[15px]">
            <span className="w-[42px] shrink-0 whitespace-nowrap"><u className="underline-offset-2">С</u>пособ</span>
            <div className="relative shrink-0">
              <button type="button" aria-label="Способ" className="flex h-5 w-[42px] items-center border border-[#0a246a] bg-white">
                <span className="flex flex-1 justify-center">{coordIcon}</span>
                <span className="flex h-full w-[15px] items-center justify-center bg-[#8d93b4]">
                  <svg width="5" height="3" aria-hidden="true"><path d="M0 0h5L2.500 3z" fill="#fff" /></svg>
                </span>
              </button>
              <MethodMenu />
            </div>
            <Sep />
            <Coord label="X" value="96.0" />
            <Coord label="Y" value="-82.0" />
            <Coord label="Z" value="-70.0" />
            <label className="ml-1 flex shrink-0 items-center whitespace-nowrap">
              <span className="flex h-5 w-5 items-center justify-center border border-[#86837d] bg-[#ece9e4]">
                <input type="checkbox" className="h-[13px] w-[13px] appearance-none border border-black bg-white" />
              </span>
              <span className="ml-[2px] w-[42px]">Объек<u>т</u></span>
            </label>
            <input
              aria-label="Объект"
              readOnly
              value="Объект не опред"
              className="mr-1 h-5 w-[95px] shrink-0 border border-[#86837d] bg-[#d4d0c8] pl-[3px] text-black"
            />
            <Check label="Ассоциировать" hot />
          </div>
        </div>
        <div className="flex h-[24px] items-stretch border-t border-black bg-gradient-to-b from-white to-[#c8c4b9]">
          <button type="button" className="ml-[2px] flex w-[85px] items-center border-r border-b border-black bg-[#fbfaf5] pl-[3px] whitespace-nowrap">
            <Icon><Dot x={5} y={4} ring={BLUE} /></Icon>
            <span className="ml-px">Параметры</span>
          </button>
          <button type="button" className="flex items-center pl-1 whitespace-nowrap text-[#86837d]">
            <Icon><path d="M0 1h5v5H0z" fill="#2040a0" /><path d="M4.500 5.500h10v9h-10z" fill="#fff" stroke="#000" /><path d="M4 3.500h7l2 3M6 8.500h2M9 8.500h4M6 10.500h2M9 10.500h4M6 12.500h2M9 12.500h4" stroke="#000" /></Icon>
            <span className="ml-px">Свойства</span>
            <span className="ml-[6px] h-[14px] w-px bg-[#86837d]" />
          </button>
        </div>
      </div>
    </section>
  );
}

export default function App() {
  return (
    <div className="flex h-screen w-full flex-col overflow-hidden bg-black font-['DejaVu_Sans_Condensed','DejaVu_Sans',sans-serif] text-[11px] leading-[14px] text-black">
      <TopBar />
      <div className="flex min-h-0 flex-1 flex-col rounded-t-md border-r-2 border-b-2 border-[#46464a] bg-gradient-to-r from-[#d4d0c8] to-[#fcfcfc]">
        <div className="h-[2px] shrink-0 rounded-t-md bg-gradient-to-r from-[#1c3f94] to-[#a6c4f0]" />
        <div className="flex min-h-0 flex-1 flex-col pr-[2px] pl-1">
          <div className="-ml-px flex shrink-0 flex-col">
            <MenuBar />
            <MainToolbar />
            <StateToolbar />
          </div>
          <div className="flex min-h-0 flex-1">
            <CompactPanel />
            <div className="ml-px flex min-w-0 flex-1 flex-col">
              <div className="flex min-h-0 flex-1">
                <TreePanel />
                <Viewport />
              </div>
              <PropertyPanel />
            </div>
          </div>
          <footer className="mt-[3px] mb-px flex h-[18px] shrink-0 items-stretch gap-[2px] pr-1 pl-[3px]">
            <span className="flex flex-1 items-center border border-[#86837d] pl-px">Выберите способ построения точки</span>
            <span className="w-[84px] border border-[#86837d]" />
            <svg width="10" height="10" className="self-end" aria-hidden="true">
              <path d="M0 10L10 0M4 10l6-6M8 10l2-2" stroke="#86837d" />
            </svg>
          </footer>
        </div>
      </div>
    </div>
  );
}
